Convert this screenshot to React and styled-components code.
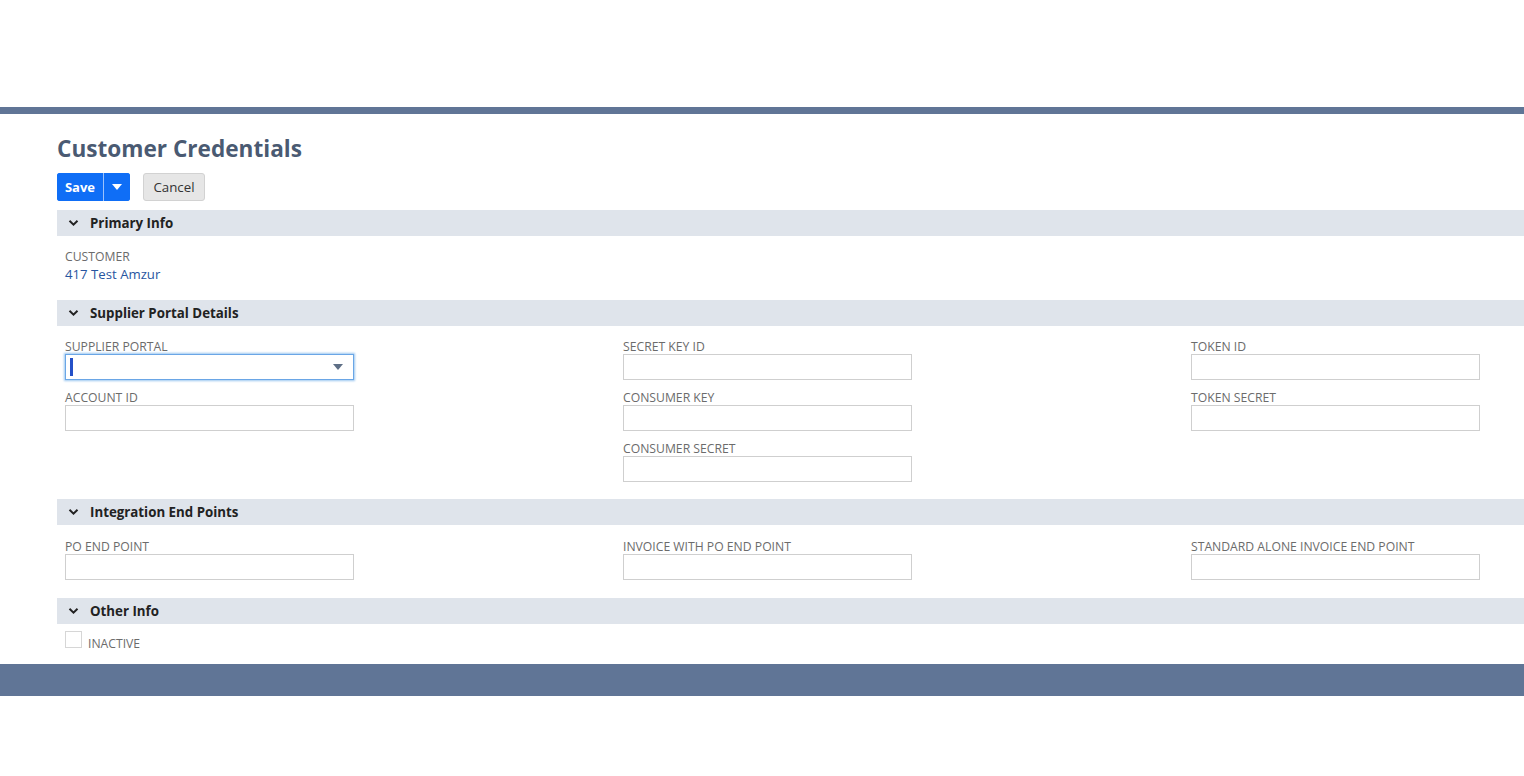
import React from 'react';
import styled, { createGlobalStyle } from 'styled-components';

const GlobalStyle = createGlobalStyle`
  body {
    margin: 0;
    background: #fff;
    font-family: "Open Sans", "Noto Sans", sans-serif;
  }
`;

const Page = styled.div`
  width: 100%;
  min-height: 776px;
  display: flex;
  flex-direction: column;
`;

const TopSpace = styled.div`
  height: 107px;
`;

const Band = styled.div`
  height: ${props => props.h}px;
  background: #607596;
`;

const Main = styled.div`
  padding: 22px 0 0 57px;
  height: 550px;
  box-sizing: border-box;
`;

const Title = styled.h1`
  margin: 0;
  font-size: 22.6px;
  line-height: 26px;
  font-weight: 700;
  color: #4a5a72;
`;

const Toolbar = styled.div`
  display: flex;
  align-items: center;
  gap: 13px;
  margin-top: 11px;
  height: 28px;
`;

const SplitButton = styled.div`
  display: flex;
  height: 28px;
  border-radius: 3px;
  overflow: hidden;
  background: #0f6ef6;
`;

const SaveButton = styled.button`
  border: none;
  background: #0f6ef6;
  color: #fff;
  font-family: inherit;
  font-weight: 700;
  font-size: 13px;
  padding: 0;
  width: 47px;
  border-right: 1px solid #9cc2fb;
`;

const ArrowButton = styled.button`
  border: none;
  background: #0f6ef6;
  width: 26px;
  display: flex;
  align-items: center;
  justify-content: center;
  padding: 0;
`;

const CancelButton = styled.button`
  height: 28px;
  width: 62px;
  padding: 0;
  border: 1px solid #d2d2d2;
  border-radius: 3px;
  background: #e6e6e6;
  color: #333;
  font-family: inherit;
  font-size: 13.3px;
`;

const SectionHead = styled.div`
  height: 26px;
  margin-top: ${props => props.top || 0}px;
  background: #dfe4eb;
  display: flex;
  align-items: center;
  padding-left: 11px;
  gap: 11px;
  font-size: 13.3px;
  font-weight: 700;
  color: #222;
`;

const SectionBody = styled.div`
  padding: ${props => props.pt}px 0 ${props => props.pb}px 8px;
`;

const Grid = styled.div`
  display: grid;
  grid-template-columns: 558px 568px 1fr;
`;

const Column = styled.div`
  display: flex;
  flex-direction: column;
  gap: 10px;
`;

const Field = styled.div`
  display: flex;
  flex-direction: column;
`;

const Label = styled.div`
  font-size: 12.2px;
  line-height: 15px;
  color: #6b6b6b;
  text-transform: uppercase;
  white-space: nowrap;
`;

const Value = styled.div`
  font-size: 13.2px;
  line-height: 16px;
  color: #2855a0;
  margin-top: 2px;
`;

const Input = styled.div`
  width: 289px;
  height: 26px;
  box-sizing: border-box;
  border: 1px solid ${props => (props.focused ? '#6aa6e6' : '#cfcfcf')};
  box-shadow: ${props => (props.focused ? '0 0 2px 1px #9cc7f0' : 'none')};
  background: #fff;
  display: flex;
  align-items: center;
  justify-content: space-between;
  padding: 0 10px 0 4px;
`;

const Caret = styled.span`
  width: 3px;
  height: 18px;
  background: #2450c8;
`;

const CheckRow = styled.div`
  display: flex;
  align-items: flex-start;
  gap: 6px;
`;

const Checkbox = styled.span`
  width: 17px;
  height: 17px;
  box-sizing: border-box;
  border: 1px solid #d6d6d6;
`;

const CheckLabel = styled(Label)`
  margin-top: 5px;
`;

const Chevron = () => (
  <svg width="11" height="8" viewBox="0 0 11 8">
    <path d="M1.5 1.8 L5.5 5.6 L9.5 1.8" fill="none" stroke="#222" strokeWidth="2" />
  </svg>
);

const Triangle = ({ color }) => (
  <svg width="10" height="6" viewBox="0 0 10 6">
    <path d="M0 0 H10 L5 6 Z" fill={color} />
  </svg>
);

const TextField = ({ label }) => (
  <Field>
    <Label>{label}</Label>
    <Input />
  </Field>
);

const Section = ({ title, top, pt, pb, children }) => (
  <>
    <SectionHead top={top}>
      <Chevron />
      <span>{title}</span>
    </SectionHead>
    <SectionBody pt={pt} pb={pb}>{children}</SectionBody>
  </>
);

export default function App() {
  return (
    <Page>
      <GlobalStyle />
      <TopSpace />
      <Band h={7} />
      <Main>
        <Title>Customer Credentials</Title>
        <Toolbar>
          <SplitButton>
            <SaveButton>Save</SaveButton>
            <ArrowButton>
              <Triangle color="#fff" />
            </ArrowButton>
          </SplitButton>
          <CancelButton>Cancel</CancelButton>
        </Toolbar>

        <Section title="Primary Info" top={9} pt={13} pb={18}>
          <Label>Customer</Label>
          <Value>417 Test Amzur</Value>
        </Section>

        <Section title="Supplier Portal Details" pt={13} pb={17}>
          <Grid>
            <Column>
              <Field>
                <Label>Supplier Portal</Label>
                <Input focused>
                  <Caret />
                  <Triangle color="#5e6f86" />
                </Input>
              </Field>
              <TextField label="Account ID" />
            </Column>
            <Column>
              <TextField label="Secret Key ID" />
              <TextField label="Consumer Key" />
              <TextField label="Consumer Secret" />
            </Column>
            <Column>
              <TextField label="Token ID" />
              <TextField label="Token Secret" />
            </Column>
          </Grid>
        </Section>

        <Section title="Integration End Points" pt={14} pb={18}>
          <Grid>
            <Column>
              <TextField label="PO End Point" />
            </Column>
            <Column>
              <TextField label="Invoice With PO End Point" />
            </Column>
            <Column>
              <TextField label="Standard Alone Invoice End Point" />
            </Column>
          </Grid>
        </Section>

        <Section title="Other Info" pt={7} pb={0}>
          <CheckRow>
            <Checkbox />
            <CheckLabel>Inactive</CheckLabel>
          </CheckRow>
        </Section>
      </Main>
      <Band h={32} />
    </Page>
  );
}
